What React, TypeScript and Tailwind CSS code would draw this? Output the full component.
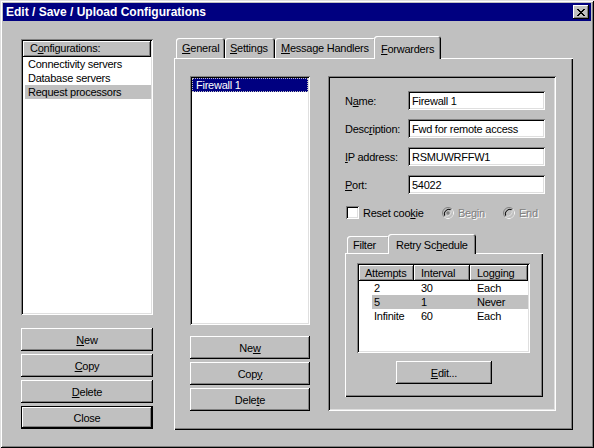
import React from "react";

const RAISED =
  "shadow-[inset_-1px_-1px_0_#000000,inset_1px_1px_0_#ffffff,inset_-2px_-2px_0_#808080]";
const SUNKEN =
  "shadow-[inset_1px_1px_0_#808080,inset_-1px_-1px_0_#ffffff,inset_2px_2px_0_#000000,inset_-2px_-2px_0_#dfdfdf]";
const TAB =
  "shadow-[inset_1px_1px_0_#ffffff,inset_-1px_0_0_#000000,inset_-2px_0_0_#808080]";
const PANEL =
  "shadow-[inset_1px_1px_0_#ffffff,inset_-1px_-1px_0_#000000,inset_-2px_-2px_0_#808080]";
const WINDOW =
  "shadow-[inset_1px_1px_0_#dfdfdf,inset_-1px_-1px_0_#000000,inset_2px_2px_0_#ffffff,inset_-2px_-2px_0_#808080]";

function U({ children }: { children: React.ReactNode }) {
  return <span className="underline underline-offset-[1px] decoration-1">{children}</span>;
}

function Btn({ children, isDefault }: { children: React.ReactNode; isDefault?: boolean }) {
  return (
    <div
      className={
        "flex h-[23px] items-center justify-center bg-[#c0c0c0] " +
        RAISED +
        (isDefault ? " border border-black" : "")
      }
    >
      {children}
    </div>
  );
}

function Radio({ checked }: { checked?: boolean }) {
  return (
    <svg width="12" height="12" viewBox="0 0 12 12" className="shrink-0">
      <circle cx="6" cy="6" r="5.5" fill="#c0c0c0" stroke="#808080" />
      <path d="M9.9 2.1 A5.5 5.5 0 0 1 2.1 9.9" fill="none" stroke="#ffffff" />
      <path d="M2.8 8.8 A4.5 4.5 0 0 1 8.8 2.8" fill="none" stroke="#000000" />
      <path d="M8.9 3.1 A4.5 4.5 0 0 1 3.1 8.9" fill="none" stroke="#dfdfdf" />
      {checked && <circle cx="6" cy="6" r="1.7" fill="#808080" />}
    </svg>
  );
}

export default function App() {
  const rows = [
    { a: "2", i: "30", l: "Each", sel: false },
    { a: "5", i: "1", l: "Never", sel: true },
    { a: "Infinite", i: "60", l: "Each", sel: false },
  ];
  return (
    <div
      className={
        "w-[594px] h-[448px] bg-[#c0c0c0] p-[3px] font-['Liberation_Sans',Arial,sans-serif] text-[11px] leading-[14px] tracking-[-0.25px] text-black select-none " +
        WINDOW
      }
    >
      {/* Title bar */}
      <div className="flex h-[18px] items-center justify-between bg-[#000080] pl-[3px] pr-[2px]">
        <span className="text-[12px] font-bold tracking-normal text-white">
          Edit / Save / Upload Configurations
        </span>
        <div className={"flex h-[14px] w-[16px] items-center justify-center bg-[#c0c0c0] " + RAISED}>
          <svg width="8" height="7" viewBox="0 0 8 7" shapeRendering="crispEdges">
            <path
              d="M0 0h2v1h-2zM6 0h2v1h-2zM1 1h2v1h-2zM5 1h2v1h-2zM2 2h4v1h-4zM3 3h2v1h-2zM2 4h4v1h-4zM1 5h2v1h-2zM5 5h2v1h-2zM0 6h2v1h-2zM6 6h2v1h-2z"
              fill="#000"
            />
          </svg>
        </div>
      </div>

      {/* Body */}
      <div className="flex items-start pl-[18px]">
        {/* Left column */}
        <div className="mt-[18px] flex w-[132px] flex-col">
          <div className={"h-[276px] bg-white p-[2px] " + SUNKEN}>
            <div className={"flex h-[16px] items-center bg-[#c0c0c0] pb-[2px] pl-[7px] " + RAISED}>
              C<U>o</U>nfigurations:
            </div>
            <div className="flex h-[14px] items-center pl-[5px]">Connectivity servers</div>
            <div className="flex h-[14px] items-center pl-[5px]">Database servers</div>
            <div className="ml-[2px] flex h-[14px] items-center bg-[#c0c0c0] pl-[3px]">
              Request processors
            </div>
          </div>
          <div className="mt-[13px] flex flex-col gap-[3px]">
            <Btn>
              <U>N</U>ew
            </Btn>
            <Btn>
              <U>C</U>opy
            </Btn>
            <Btn>
              <U>D</U>elete
            </Btn>
            <Btn isDefault>Close</Btn>
          </div>
        </div>

        {/* Tab control */}
        <div className="ml-[21px] mt-[15px] flex w-[399px] flex-col">
          <div className="relative z-10 flex h-[22px] items-end pl-[2px]">
            <div className={"h-[20px] w-[49px] rounded-t-[3px] pl-[6px] pt-[3px] " + TAB}>
              <U>G</U>eneral
            </div>
            <div className={"h-[20px] w-[50px] rounded-t-[3px] pl-[5px] pt-[3px] " + TAB}>
              <U>S</U>ettings
            </div>
            <div className={"h-[20px] w-[101px] rounded-t-[3px] pl-[6px] pt-[3px] " + TAB}>
              <U>M</U>essage Handlers
            </div>
            <div
              className={
                "relative -mb-px -ml-[2px] h-[23px] w-[67px] rounded-t-[3px] bg-[#c0c0c0] pl-[7px] pt-[6px] " +
                TAB
              }
            >
              <U>F</U>orwarders
            </div>
          </div>
          <div className={"flex h-[372px] items-start pl-[16px] pt-[18px] " + PANEL}>
            {/* Middle list */}
            <div className="flex w-[120px] flex-col">
              <div className={"h-[249px] bg-white p-[2px] " + SUNKEN}>
                <div className="flex h-[14px] items-center bg-[#000080] pl-[4px] text-white outline outline-1 -outline-offset-1 outline-dotted outline-[#c0c0c0]">
                  Firewall 1
                </div>
              </div>
              <div className="mt-[11px] flex flex-col gap-[3px]">
                <Btn>
                  Ne<U>w</U>
                </Btn>
                <Btn>
                  Cop<U>y</U>
                </Btn>
                <Btn>
                  Dele<U>t</U>e
                </Btn>
              </div>
            </div>

            {/* Details group */}
            <div className={"ml-[18px] flex h-[335px] w-[228px] flex-col pl-[17px] pt-[15px] " + SUNKEN}>
              <div className="flex flex-col gap-[9px]">
                {[
                  { label: <>N<U>a</U>me:</>, value: "Firewall 1" },
                  { label: <>Desc<U>r</U>iption:</>, value: "Fwd for remote access" },
                  { label: <><U>I</U>P address:</>, value: "RSMUWRFFW1" },
                  { label: <><U>P</U>ort:</>, value: "54022" },
                ].map((r, idx) => (
                  <div key={idx} className="flex h-[19px] items-center">
                    <div className="w-[63px]">{r.label}</div>
                    <div className={"flex h-[19px] w-[137px] items-center bg-white pl-[4px] " + SUNKEN}>
                      {r.value}
                    </div>
                  </div>
                ))}
              </div>

              {/* Checkbox + radios */}
              <div className="mt-[12px] flex h-[13px] items-center pl-[1px]">
                <div className="flex w-[96px] items-center gap-[4px]">
                  <div className={"h-[13px] w-[13px] shrink-0 bg-white " + SUNKEN} />
                  <span>
                    Reset coo<U>k</U>ie
                  </span>
                </div>
                <div className="flex w-[61px] items-center gap-[4px] text-[#808080] [text-shadow:1px_1px_0_#ffffff]">
                  <Radio checked />
                  <span>Begin</span>
                </div>
                <div className="flex items-center gap-[4px] text-[#808080] [text-shadow:1px_1px_0_#ffffff]">
                  <Radio />
                  <span>End</span>
                </div>
              </div>

              {/* Inner tab control */}
              <div className="mt-[15px] flex w-[198px] flex-col">
                <div className="relative z-10 flex h-[19px] items-end pl-[2px]">
                  <div className={"flex h-[17px] w-[43px] items-center rounded-t-[3px] pl-[6px] " + TAB}>
                    Filter
                  </div>
                  <div
                    className={
                      "relative -mb-px -ml-[2px] h-[20px] w-[88px] rounded-t-[3px] bg-[#c0c0c0] pl-[8px] pt-[4px] " +
                      TAB
                    }
                  >
                    Retry Sc<U>h</U>edule
                  </div>
                </div>
                <div className={"flex h-[144px] flex-col pl-[12px] pt-[10px] " + PANEL}>
                  <div className={"h-[90px] w-[173px] bg-white p-[2px] " + SUNKEN}>
                    <div className="flex h-[16px]">
                      <div className={"flex w-[55px] items-center bg-[#c0c0c0] pl-[6px] " + RAISED}>Attempts</div>
                      <div className={"flex w-[56px] items-center bg-[#c0c0c0] pl-[7px] " + RAISED}>Interval</div>
                      <div className={"flex w-[58px] items-center bg-[#c0c0c0] pl-[7px] " + RAISED}>Logging</div>
                    </div>
                    {rows.map((r) => (
                      <div key={r.a} className="pl-[13px]">
                        <div className={"flex h-[14px] items-center" + (r.sel ? " bg-[#c0c0c0]" : "")}>
                          <div className="w-[42px] pl-[2px]">{r.a}</div>
                          <div className="w-[56px] pl-[7px]">{r.i}</div>
                          <div className="w-[58px] pl-[7px]">{r.l}</div>
                        </div>
                      </div>
                    ))}
                  </div>
                  <div className="mt-[8px] w-[96px] self-center -ml-[12px]">
                    <Btn>
                      <U>E</U>dit...
                    </Btn>
                  </div>
                </div>
              </div>
            </div>
          </div>
        </div>
      </div>
    </div>
  );
}
